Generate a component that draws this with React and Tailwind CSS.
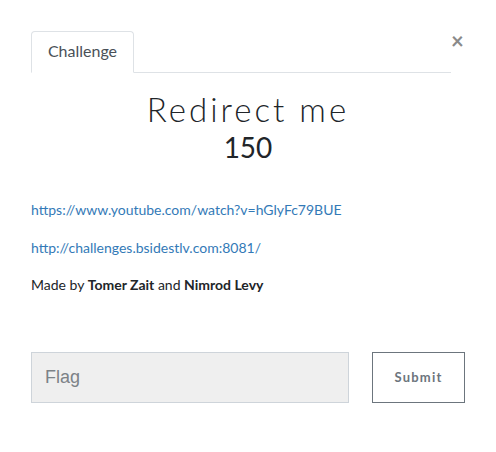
export default function App() {
  return (
    <div className="w-[496px] h-[452px] bg-white relative" style={{ fontFamily: "Lato, 'Liberation Sans', sans-serif" }}>
      <button className="absolute left-[451px] top-[30px] text-[22px] leading-none font-bold text-[#8a8a8a]">×</button>
      <div className="pt-[31px] px-[31px]">
        <div className="w-[420px] flex border-b border-[#dee2e6]">
          <div className="w-[103px] h-[42px] -mb-px border border-[#dee2e6] border-b-white rounded-t-[4px] bg-white flex items-center justify-center pb-[2px] text-[16px] text-[#495057]">
            Challenge
          </div>
        </div>
        <div className="-ml-[31px] w-[496px] flex flex-col items-center mt-[16px]">
          <div className="text-[33px] leading-[40px] font-light tracking-[3px] text-[#212529]">Redirect me</div>
          <div className="text-[28px] leading-[34px] text-[#212529] mt-[1px]">150</div>
        </div>
        <div className="mt-[36px] text-[14px] text-[#212529] flex flex-col gap-[17.5px] leading-[20px]">
          <a className="text-[#337ab7]">https://www.youtube.com/watch?v=hGlyFc79BUE</a>
          <a className="text-[#337ab7]">http://challenges.bsidestlv.com:8081/</a>
          <div>Made by <b>Tomer Zait</b> and <b>Nimrod Levy</b></div>
        </div>
        <div className="mt-[57px] flex gap-[23px]">
          <div className="w-[318px] h-[51px] bg-[#efefef] border border-[#ced4da] flex items-center pl-[13px] text-[18px] text-[#7c8287]" style={{ fontFamily: "'Liberation Sans', Arial, sans-serif" }}>
            Flag
          </div>
          <button className="w-[93px] h-[51px] border border-[#6c757d] text-[13px] font-bold tracking-[1.2px] text-[#6c757d]">
            Submit
          </button>
        </div>
      </div>
    </div>
  );
}
